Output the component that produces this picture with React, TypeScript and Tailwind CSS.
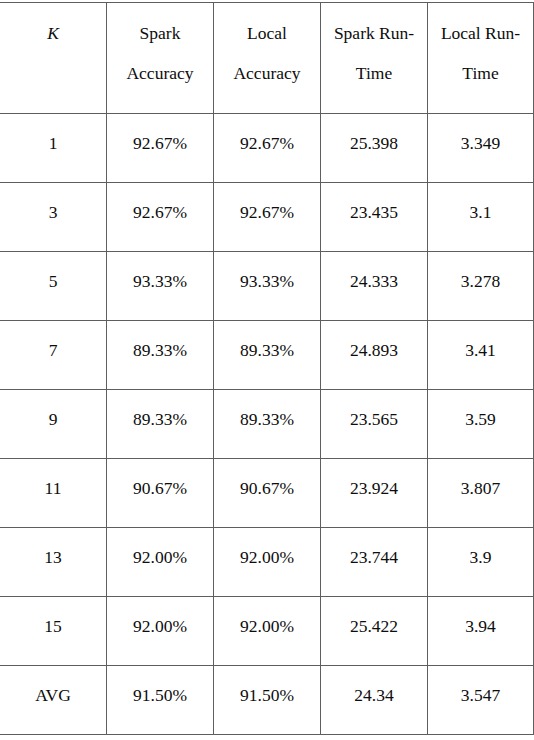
const header = ['Spark Accuracy', 'Local Accuracy', 'Spark Run-Time', 'Local Run-Time'];

const rows = [
  ['1', '92.67%', '92.67%', '25.398', '3.349'],
  ['3', '92.67%', '92.67%', '23.435', '3.1'],
  ['5', '93.33%', '93.33%', '24.333', '3.278'],
  ['7', '89.33%', '89.33%', '24.893', '3.41'],
  ['9', '89.33%', '89.33%', '23.565', '3.59'],
  ['11', '90.67%', '90.67%', '23.924', '3.807'],
  ['13', '92.00%', '92.00%', '23.744', '3.9'],
  ['15', '92.00%', '92.00%', '25.422', '3.94'],
  ['AVG', '91.50%', '91.50%', '24.34', '3.547'],
];

const widths = ['w-[107px]', 'w-[107px]', 'w-[107px]', 'w-[107px]', 'w-[106px]'];

export default function App() {
  return (
    <div className="h-[740px] w-[534px] overflow-hidden bg-white pt-[2px] font-['Liberation_Serif',serif] text-[17.5px] leading-[40px] text-[#0d0d0d]">
      <div className="ml-[-1px] w-[535px] border-t border-r border-[#5e5e5e]">
        <div className="flex h-[111px] border-b border-[#5e5e5e]">
          <div className={`${widths[0]} shrink-0 border-l border-[#5e5e5e] pt-[10px] text-center italic`}>K</div>
          {header.map((h, i) => {
            const parts = h.split(' ');
            const first = h.includes('Run') ? h.replace('-Time', '-') : parts[0];
            const second = h.includes('Run') ? 'Time' : parts[1];
            return (
              <div key={h} className={`${widths[i + 1]} shrink-0 border-l border-[#5e5e5e] pt-[10px] text-center`}>
                <div>{first}</div>
                <div>{second}</div>
              </div>
            );
          })}
        </div>
        {rows.map((r) => (
          <div key={r[0]} className="flex h-[69px] border-b border-[#5e5e5e]">
            {r.map((c, i) => (
              <div key={i} className={`${widths[i]} shrink-0 border-l border-[#5e5e5e] pt-[9px] text-center`}>
                {c}
              </div>
            ))}
          </div>
        ))}
      </div>
    </div>
  );
}
